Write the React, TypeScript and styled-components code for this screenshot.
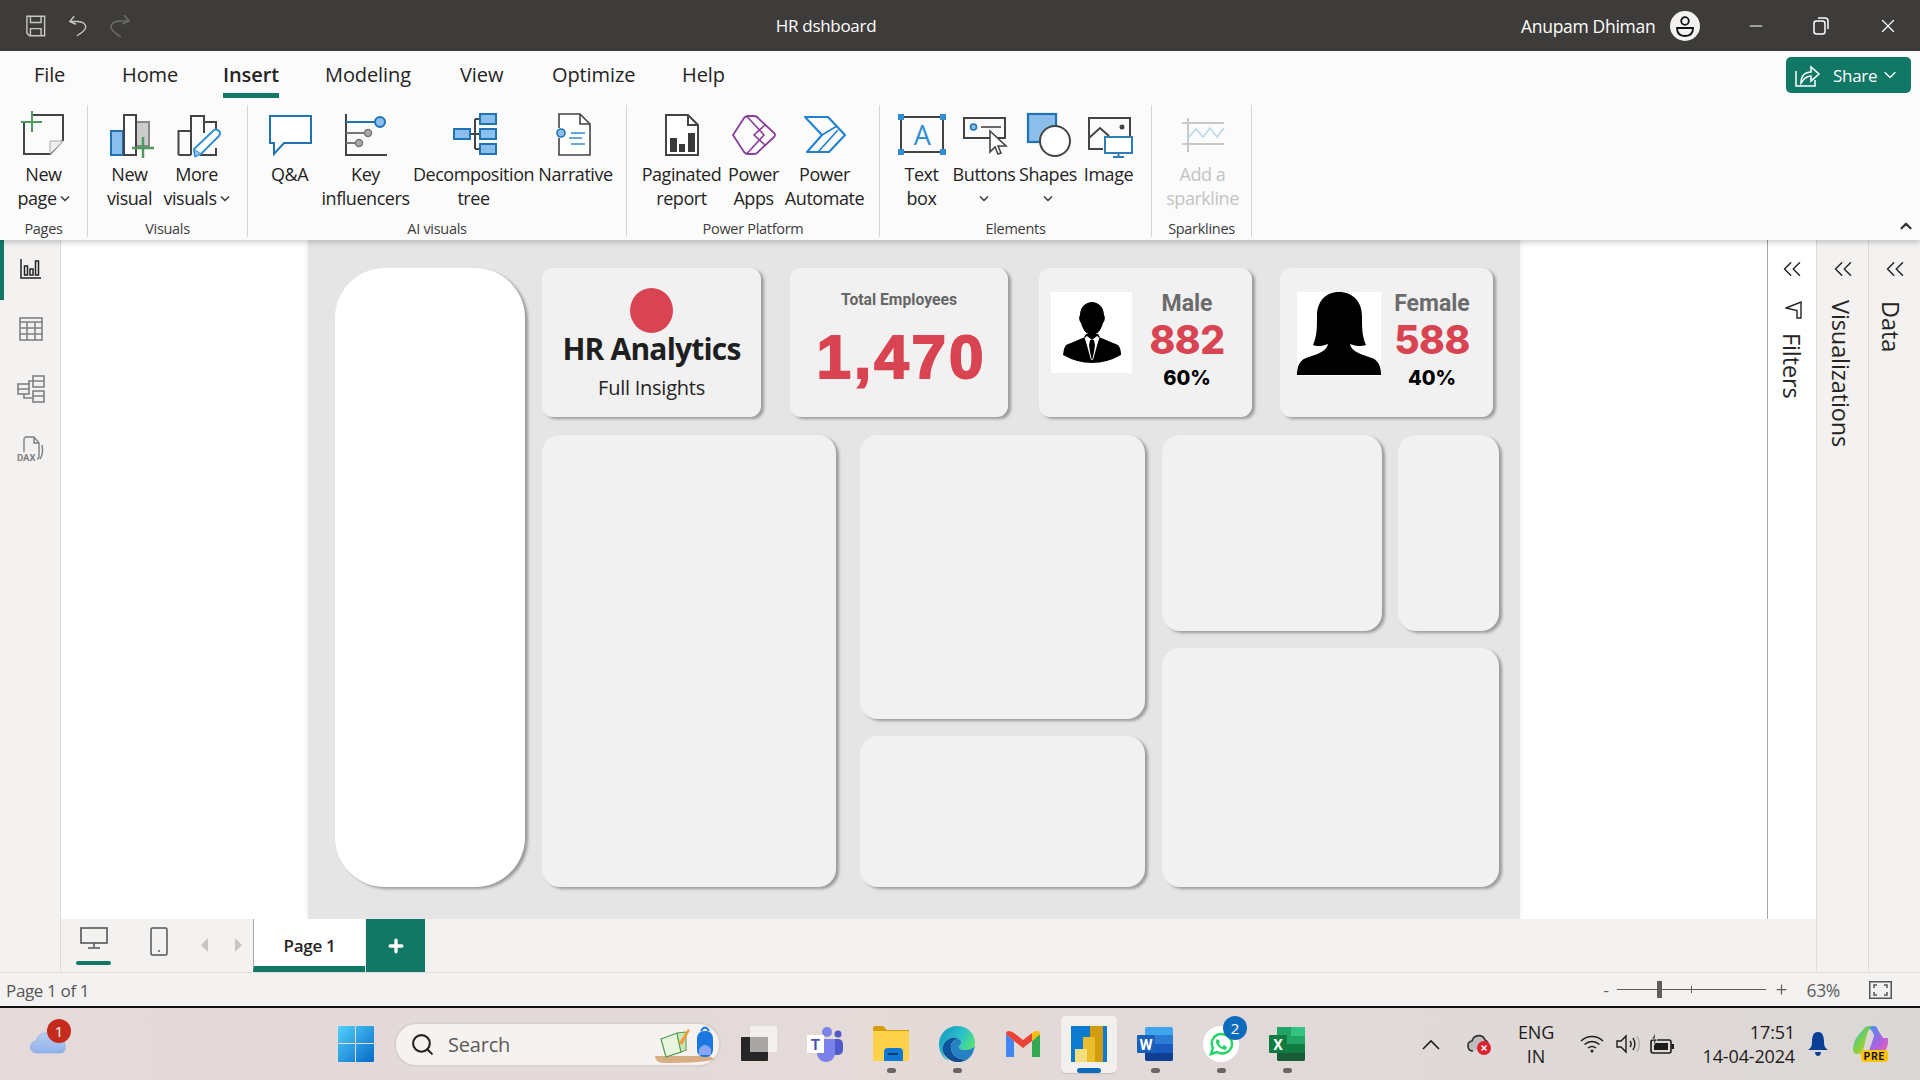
import React from 'react';
import styled, { createGlobalStyle } from 'styled-components';
import { ChevronDown, ChevronUp, ChevronsLeft, Minus, X, Search as SearchIcon, Plus } from 'lucide-react';

const Global = createGlobalStyle`
  html, body { margin: 0; padding: 0; width: 1920px; height: 1080px; overflow: hidden; background: #fff; }
  * { box-sizing: border-box; }
  body { font-family: "Open Sans", "Noto Sans", sans-serif; color: #252423; }
`;

const Shell = styled.div`
  width: 1920px; height: 1080px; display: flex; flex-direction: column; overflow: hidden;
`;
const TitleBar = styled.header`
  height: 51px; flex: none; background: #3d3c3a; color: #fff; display: flex; align-items: center;
`;
const QuickTools = styled.div`
  width: 131px; flex: none; display: flex; align-items: center; padding-left: 26px; gap: 22px;
`;
const MirrorIcon = styled.span`
  display: flex; transform: scaleX(-1);
`;
const DocTitle = styled.div`
  flex: 1; text-align: center; font-size: 17px; letter-spacing: -0.3px;
`;
const UserArea = styled.div`
  width: 399px; flex: none; display: flex; align-items: center;
`;
const UserName = styled.span`
  width: 133px; font-size: 17.5px; white-space: nowrap; letter-spacing: -0.3px;
`;
const WinButton = styled.span<{ $ml: number }>`
  display: flex; margin-left: ${p => p.$ml}px;
`;

const Ribbon = styled.section`
  height: 189px; flex: none; background: #fbfbfb; position: relative; z-index: 2;
  box-shadow: 0 2px 6px rgba(0,0,0,.22);
`;
const TabRow = styled.nav`
  height: 54px; display: flex; align-items: flex-start; padding: 6px 9px 0 34px;
`;
const Tab = styled.div<{ $w: number }>`
  width: ${p => p.$w}px; font-size: 20px;
`;
const TabLabel = styled.span<{ $active?: boolean }>`
  display: inline-block; line-height: 36px; height: 41px; letter-spacing: -0.1px;
  font-weight: ${p => (p.$active ? 600 : 400)};
  border-bottom: 5px solid ${p => (p.$active ? '#117865' : 'transparent')};
`;
const ShareButton = styled.div`
  margin-left: auto; width: 125px; height: 36px; background: #117865; border-radius: 5px; color: #fff;
  display: flex; align-items: center; padding-left: 9px; font-size: 17px; letter-spacing: -0.3px;
`;
const ShareText = styled.span`
  margin-left: 12px; margin-right: 3px;
`;
const Groups = styled.div`
  display: flex; height: 132px; align-items: stretch;
`;
const Group = styled.div<{ $w: number; $pl: number }>`
  width: ${p => p.$w}px; flex: none; border-right: 1px solid #d6d6d6; display: flex; flex-direction: column;
  padding-left: ${p => p.$pl}px;
`;
const GroupItems = styled.div`
  display: flex; height: 112px; flex: none; padding-top: 5px;
`;
const GroupLabel = styled.div<{ $pl: number }>`
  margin-left: ${p => -p.$pl}px; text-align: center; font-size: 14.5px; line-height: 20px; color: #3d3c3b; flex: none;
  letter-spacing: -0.3px; padding-top: 2px;
`;
const Item = styled.div<{ $w: number; $off?: boolean }>`
  width: ${p => p.$w}px; flex: none; display: flex; flex-direction: column; align-items: center; padding-left: 1px;
  font-size: 18px; line-height: 24px; letter-spacing: -0.45px; white-space: nowrap; text-align: center;
  color: ${p => (p.$off ? '#c4c4c4' : '#252423')};
  & > svg:first-child { margin-bottom: 4px; }
`;
const ItemLine = styled.span`
  display: flex; align-items: center; height: 24px;
`;
const Collapse = styled.span`
  margin-left: auto; align-self: flex-end; display: flex; padding: 0 5px 2px 0; color: #333;
`;

const Workspace = styled.main`
  flex: 1; min-height: 0; display: flex; background: #f3f2f1;
`;
const Rail = styled.aside`
  width: 61px; flex: none; background: #f3f2f1; border-right: 1px solid #dedcda; display: flex; flex-direction: column;
`;
const RailButton = styled.div<{ $active?: boolean }>`
  height: 60px; display: flex; align-items: center; justify-content: center; padding: 0 0 3px 2px;
  box-shadow: ${p => (p.$active ? 'inset 4px 0 0 #117865' : 'none')};
`;
const Middle = styled.div`
  flex: 1; min-width: 0; display: flex; flex-direction: column;
`;
const CanvasRow = styled.div`
  flex: 1; min-height: 0; display: flex;
`;
const CanvasArea = styled.div`
  flex: 1; background: #fff; padding-left: 247px;
`;
const Canvas = styled.div`
  width: 1212px; height: 100%; background: #e5e5e5; display: flex; gap: 17px; padding: 28px 21px 0 27px;
  box-shadow: 0 0 6px rgba(0,0,0,.08);
`;
const cardShadow = '3px 2px 3px rgba(0,0,0,.32)';
const TallCard = styled.div`
  width: 190px; height: 619px; background: #fff; border-radius: 50px; box-shadow: ${cardShadow}; flex: none;
`;
const CanvasColumn = styled.div`
  flex: 1; display: flex; flex-direction: column; gap: 18px;
`;
const TopRow = styled.div`
  height: 149px; display: flex;
`;
const KpiCard = styled.div<{ $w: number; $ml?: number }>`
  width: ${p => p.$w}px; margin-left: ${p => p.$ml || 0}px; height: 149px; background: #f1f1f1; border-radius: 11px;
  box-shadow: ${cardShadow}; flex: none;
`;
const BrandCard = styled(KpiCard)`
  display: flex; flex-direction: column; align-items: center; padding-top: 20px;
`;
const BrandDot = styled.div`
  width: 43px; height: 45px; border-radius: 50%; background: #d94452;
`;
const BrandName = styled.div`
  font-size: 30px; font-weight: 700; line-height: 34px; color: #1f1f1f; letter-spacing: -0.8px; margin-top: -1px;
`;
const BrandSub = styled.div`
  font-size: 20px; line-height: 28px; color: #252423; letter-spacing: -0.25px; margin-top: 8px;
`;
const TotalCard = styled(KpiCard)`
  display: flex; flex-direction: column; align-items: center; padding-top: 21px;
`;
const TotalLabel = styled.div`
  font-family: Roboto, sans-serif; font-weight: 700; font-size: 15.7px; line-height: 22px; color: #666;
`;
const TotalValue = styled.div`
  font-family: "Liberation Sans", Arial, sans-serif; font-weight: 700; font-size: 62px; line-height: 70px; color: #d94452;
  -webkit-text-stroke: 2px #d94452; letter-spacing: 3px; margin: 11px 0 0 5px;
`;
const GenderCard = styled(KpiCard)<{ $pl: number }>`
  display: flex; padding: 24px 0 0 ${p => p.$pl}px;
`;
const Portrait = styled.div<{ $s: number }>`
  width: ${p => p.$s}px; height: ${p => p.$s}px; background: #fff; flex: none; display: flex;
`;
const GenderStats = styled.div<{ $ml: number }>`
  width: 100px; margin-left: ${p => p.$ml}px; margin-top: -1px; display: flex; flex-direction: column; align-items: center; flex: none;
`;
const GenderLabel = styled.div`
  font-family: Roboto, sans-serif; font-weight: 700; font-size: 23px; line-height: 26px; color: #6b6b6b;
`;
const GenderValue = styled.div`
  font-family: Inter, sans-serif; font-weight: 800; font-size: 39px; line-height: 46px; color: #d94452; margin-top: 0; letter-spacing: -0.5px;
`;
const GenderShare = styled.div`
  font-family: Inter, sans-serif; font-weight: 800; font-size: 20px; line-height: 24px; color: #000; margin-top: 3px;
`;
const LowerRow = styled.div`
  display: flex; height: 452px;
`;
const EmptyCard = styled.div<{ $w?: number; $h?: number; $ml?: number }>`
  width: ${p => (p.$w ? `${p.$w}px` : 'auto')}; height: ${p => (p.$h ? `${p.$h}px` : 'auto')};
  margin-left: ${p => p.$ml || 0}px; background: #f1f1f1; border-radius: 18px; box-shadow: ${cardShadow}; flex: none;
`;
const Stack = styled.div<{ $w: number; $ml: number }>`
  width: ${p => p.$w}px; margin-left: ${p => p.$ml}px; display: flex; flex-direction: column; gap: 17px; flex: none;
`;
const Pair = styled.div`
  display: flex; gap: 16px;
`;

const Pane = styled.div<{ $w: number; $bg: string; $line: string }>`
  width: ${p => p.$w}px; flex: none; background: ${p => p.$bg}; border-left: 1px solid ${p => p.$line};
  display: flex; flex-direction: column; align-items: center; padding-top: 14px;
`;
const PaneLabel = styled.div<{ $mt: number; $mr?: number }>`
  writing-mode: vertical-rl; font-size: 23.5px; line-height: 30px; margin-top: ${p => p.$mt}px; margin-right: ${p => p.$mr || 0}px;
  color: #252423; letter-spacing: -0.1px;
`;
const FilterMark = styled.span`
  display: flex; margin: 17px 0 0 4px;
`;

const BottomBar = styled.div`
  height: 53px; flex: none; display: flex; background: #f3f2f1;
`;
const DeviceCell = styled.div<{ $w: number }>`
  width: ${p => p.$w}px; flex: none; position: relative; display: flex; justify-content: center; padding-top: 8px;
`;
const DeviceMark = styled.span`
  position: absolute; left: 15px; bottom: 7px; width: 35px; height: 4px; border-radius: 2px; background: #117865;
`;
const PagerArrow = styled.svg<{ $ml?: number }>`
  width: 8px; height: 14px; margin: 11px 0 0 ${p => p.$ml || 0}px;
`;
const PageTab = styled.div`
  width: 112px; flex: none; background: #fff; border-left: 1px solid #a8a8a8; border-bottom: 6px solid #117865;
  display: flex; align-items: center; justify-content: center; font-size: 17px; font-weight: 600; color: #252423; padding-top: 5px; letter-spacing: -0.3px;
`;
const AddTab = styled.div`
  width: 59px; flex: none; margin-left: 1px; background: #117865; color: #fff; display: flex; align-items: center; justify-content: center;
`;
const StatusBar = styled.footer`
  height: 36px; flex: none; background: #f3f2f1; border-top: 1px solid #e1dfdd; border-bottom: 2px solid #111;
  display: flex; align-items: center; padding: 2px 28px 0 6px; font-size: 17px; color: #555; letter-spacing: -0.35px;
`;
const ZoomControls = styled.div`
  margin-left: auto; display: flex; align-items: center; color: #605e5c; margin-top: -2px;
`;
const ZoomTrack = styled.div`
  width: 149px; height: 1px; background: #605e5c; margin: 0 8px; position: relative;
`;
const ZoomThumb = styled.span`
  position: absolute; left: 40px; top: -8px; width: 5px; height: 17px; background: #605e5c;
`;
const ZoomTick = styled.span`
  position: absolute; left: 74px; top: -3px; width: 1px; height: 7px; background: #605e5c;
`;
const ZoomPercent = styled.span`
  margin: 0 29px 0 18px; font-size: 17.5px;
`;

const Taskbar = styled.div`
  height: 72px; flex: none; display: flex; align-items: center; padding-left: 30px;
  background: linear-gradient(90deg, #e3dad9 0%, #e4dad8 45%, #dcd8d6 100%);
  color: #1c1c1c;
`;
const Slot = styled.div<{ $w?: number; $ml: number }>`
  width: ${p => p.$w || 36}px; height: 36px; margin-left: ${p => p.$ml}px; flex: none; position: relative;
  display: flex; align-items: center; justify-content: center;
`;
const ActiveSlot = styled(Slot)`
  height: 57px; background: #f3efed; border-radius: 5px; box-shadow: 0 1px 1px rgba(0,0,0,.12);
`;
const RunDot = styled.span`
  position: absolute; left: 50%; bottom: -11px; width: 9px; height: 5px; margin-left: -4px; border-radius: 3px; background: #6b6665;
`;
const ActiveBar = styled.span`
  position: absolute; left: 16px; bottom: 0; width: 24px; height: 5px; border-radius: 3px; background: #0f6cbd;
`;
const CountBadge = styled.span<{ $bg: string; $x: number; $y: number }>`
  position: absolute; left: ${p => p.$x}px; top: ${p => p.$y}px; width: 24px; height: 24px; border-radius: 50%; background: ${p => p.$bg};
  color: #fff; font-size: 15px; display: flex; align-items: center; justify-content: center;
`;
const CloudHolder = styled.span`
  display: flex; margin-top: -6px;
`;
const SearchBox = styled.div`
  width: 327px; height: 45px; margin-left: 20px; flex: none; border-radius: 23px; background: #f6f2f0; border: 2px solid #d9d1cf;
  display: flex; align-items: center; padding-left: 14px; font-size: 20px; color: #5d5a59; letter-spacing: -0.2px;
`;
const SearchWord = styled.span`
  margin-left: 13px;
`;
const SearchArt = styled.span`
  margin-left: auto; display: flex; margin-right: 2px;
`;
const TrayText = styled.div<{ $w: number; $ml: number; $align: string }>`
  width: ${p => p.$w}px; margin-left: ${p => p.$ml}px; flex: none; font-size: 18px; line-height: 24px; text-align: ${p => p.$align}; letter-spacing: -0.15px;
  color: #1c1c1c;
`;

const ChevronTiny = () => <svg width="10" height="7" viewBox="0 0 10 7" style={{ marginLeft: 3 }}><path d="M1 1.5l4 4 4-4" fill="none" stroke="#333" strokeWidth="1.4" /></svg>;
const ChevronSolo = () => <svg width="10" height="7" viewBox="0 0 10 7"><path d="M1 1.5l4 4 4-4" fill="none" stroke="#333" strokeWidth="1.4" /></svg>;

const I48 = ({ children }: { children: React.ReactNode }) => <svg width="48" height="48" viewBox="0 0 48 48" fill="none">{children}</svg>;
const dk = '#444';
const bl = '#1f73b5';
const lb = '#8cbeec';
const gr = '#4f9a5e';

const NewPageIcon = () => <I48><path d="M4 12V44H30L43 30V5H12" stroke={dk} strokeWidth="2" /><path d="M30 44V31H43L30 44Z" fill="#f0f0f0" stroke="#aaa" /><path d="M12 1V22M1 12H22" stroke={gr} strokeWidth="2" /></I48>;
const NewVisualIcon = () => <I48><rect x="5" y="21" width="12" height="24" fill={lb} stroke={bl} strokeWidth="2" /><rect x="30" y="12" width="13" height="24" fill="#ccc" stroke="#888" strokeWidth="2" /><rect x="18" y="5" width="12" height="40" fill="#fff" stroke={dk} strokeWidth="2" /><path d="M37 27V48M26 38H48" stroke={gr} strokeWidth="2.5" /></I48>;
const MoreVisualsIcon = () => <I48><path d="M5.5 45V21H18M18 45H5.5M18 45V6H31V23M31 12H43V22M43 38V45H27" stroke={dk} strokeWidth="2" /><path d="M22 46l-1-7L40 21c2-2 4-2 6 0s1 3 0 5L28 44l-6 2Z" fill="#fff" stroke="#2f8fd0" strokeWidth="2" /><path d="M21 39l7 5-6 3Z" fill={lb} stroke="#2f8fd0" /></I48>;
const QnaIcon = () => <I48><path d="M4 6H45V33H18L8 44V33H4Z" fill="#fff" stroke={bl} strokeWidth="2" /></I48>;
const KeyIcon = () => <I48><path d="M4 4V45H45" stroke={dk} strokeWidth="2" /><path d="M4 12H38" stroke={bl} strokeWidth="2" /><circle cx="38" cy="12" r="5" fill={lb} stroke={bl} strokeWidth="2" /><path d="M4 23H26M4 33H17" stroke="#777" strokeWidth="2" /><circle cx="26" cy="23" r="3.5" fill="#aaa" stroke="#777" strokeWidth="1.5" /><circle cx="17" cy="33" r="3.5" fill="#aaa" stroke="#777" strokeWidth="1.5" /></I48>;
const DecompIcon = () => <I48><path d="M20 24H30M25 9V39M25 9H30M25 39H30" stroke={dk} strokeWidth="2" /><rect x="4" y="19" width="16" height="10" fill={lb} stroke={bl} strokeWidth="2" /><rect x="30" y="4" width="16" height="10" fill={lb} stroke={bl} strokeWidth="2" /><rect x="30" y="19" width="16" height="10" fill={lb} stroke={bl} strokeWidth="2" /><rect x="30" y="34" width="16" height="10" fill={lb} stroke={bl} strokeWidth="2" /></I48>;
const NarrativeIcon = () => <I48><path d="M7 18V4H28L38 14V45H7V28" fill="#fff" stroke={dk} strokeWidth="1.6" /><path d="M28 4V14H38" stroke={dk} strokeWidth="1.6" /><circle cx="9" cy="23" r="4" fill={lb} stroke={bl} strokeWidth="1.6" /><path d="M19 23H33M17 28H30M19 34H33" stroke="#2f8fd0" strokeWidth="1.6" /></I48>;
const PaginatedIcon = () => <I48><path d="M8 5H30L40 15V45H8Z" fill="#fff" stroke={dk} strokeWidth="2" /><path d="M30 5V15H40" stroke={dk} strokeWidth="2" /><path d="M12 28h7v14h-7zM21 34h6v8h-6zM30 23h7v19h-7z" fill="#3b3a39" /></I48>;
const PowerAppsIcon = () => <I48><path d="M3 25L14 8Q16 6 18 6H24Q27 6 29 9L44 23Q46 25 44 27L29 41Q27 44 24 44H18Q16 44 14 42Z" stroke="#8a3d9c" strokeWidth="1.8" /><path d="M17 6.500L34 25L17 43.500M35 15L24 25L35 35" stroke="#8a3d9c" strokeWidth="1.600" /></I48>;
const AutomateIcon = () => <I48><path d="M4 7H27L44 25L28 42H6L21 25Z" stroke="#1f7fd0" strokeWidth="2" strokeLinejoin="round" /><path d="M21 25L36 16M17 42L37 20" stroke="#1f7fd0" strokeWidth="1.6" /></I48>;
const TextBoxIcon = () => <I48><rect x="3" y="7" width="42" height="35" stroke={dk} strokeWidth="2" /><rect x="0" y="4" width="6" height="6" fill="#2f8fd0" /><rect x="42" y="4" width="6" height="6" fill="#2f8fd0" /><rect x="0" y="39" width="6" height="6" fill="#2f8fd0" /><rect x="42" y="39" width="6" height="6" fill="#2f8fd0" /><text x="24" y="35" textAnchor="middle" fontFamily="'Open Sans', sans-serif" fontSize="27" fill="#2f8fd0">A</text></I48>;
const ButtonsIcon = () => <I48><path d="M4 8H45V28H4Z" fill="#fbfbfb" stroke={dk} strokeWidth="2" /><circle cx="13.5" cy="17" r="3" fill={lb} stroke={bl} strokeWidth="1.5" /><path d="M21 17H41" stroke={dk} strokeWidth="1.6" /><path d="M30 21V42L35 37L38 44L41 43L38 36H46Z" fill="#fff" stroke={dk} strokeWidth="1.6" /></I48>;
const ShapesIcon = () => <I48><rect x="4" y="4" width="28" height="28" fill={lb} stroke={bl} strokeWidth="2.2" /><circle cx="31" cy="31" r="15" fill="#fff" stroke={dk} strokeWidth="2" /></I48>;
const ImageIcon = () => <I48><path d="M18 39H4V8H45V26" fill="#fbfbfb" stroke={dk} strokeWidth="2" /><path d="M4 28L15 18L24 26" stroke={dk} strokeWidth="2" /><circle cx="37" cy="17" r="2.5" fill={dk} /><rect x="20" y="27" width="27" height="16" fill="#fff" stroke="#2f7fb5" strokeWidth="2" /><path d="M33.5 43V47M28 47H39" stroke="#2f7fb5" strokeWidth="2" /></I48>;
const SparkIcon = () => <I48><path d="M3 13H45M3 34H45M9 8V42" stroke="#c8c8c8" strokeWidth="2" /><path d="M9 28L17 19L24 27L31 18L38 27L45 18" stroke="#b8d8ec" strokeWidth="1.6" /></I48>;

const SaveIcon = () => <svg width="22" height="24" viewBox="0 0 22 24" fill="none" stroke="#c8c6c4" strokeWidth="1.6"><path d="M1 1H21V23H4L1 20Z" /><path d="M5 1V8H17V1M5 23V15H17V23" /></svg>;
const UndoIcon = ({ c }: { c: string }) => <svg width="22" height="24" viewBox="0 0 22 24" fill="none" stroke={c} strokeWidth="1.6"><path d="M7 1L2 7L9 10M2 7H11C17 7 20 10 20 13C20 16 15 20 10 23" /></svg>;
const AvatarIcon = () => <svg width="30" height="30" viewBox="0 0 30 30"><circle cx="15" cy="15" r="15" fill="#f3f2f1" /><circle cx="15" cy="10" r="3.8" fill="none" stroke="#111" strokeWidth="1.8" /><path d="M7 17H23C23 22 20 25 15 25C10 25 7 22 7 17Z" fill="none" stroke="#111" strokeWidth="1.8" /></svg>;
const RestoreIcon = () => <svg width="16" height="18" viewBox="0 0 16 18" fill="none" stroke="#fff" strokeWidth="1.5"><rect x="1" y="4" width="11" height="13" rx="2.5" /><path d="M5 1H12C14 1 15 2 15 4V12" /></svg>;
const ShareIcon = () => <svg width="26" height="26" viewBox="0 0 26 26" fill="none" stroke="#fff" strokeWidth="1.5"><path d="M1 9V24H20V18" /><path d="M6 21C6 14 10 10 16 10V5L24 12L16 19V14C12 14 9 16 6 21Z" /></svg>;

const ReportRail = () => <svg width="22" height="22" viewBox="0 0 22 22" fill="none" stroke="#222" strokeWidth="1.5"><path d="M1 1V20H21" /><rect x="4.5" y="8" width="3" height="9" /><rect x="10" y="11" width="3" height="6" /><rect x="15.5" y="3" width="3" height="14" /></svg>;
const TableRail = () => <svg width="24" height="24" viewBox="0 0 24 24" fill="none" stroke="#808080" strokeWidth="1.6"><rect x="1" y="1" width="22" height="22" /><path d="M1 5H23M1 11H23M1 17H23M8 5V23M16 5V23" /></svg>;
const ModelRail = () => <svg width="28" height="28" viewBox="0 0 28 28" fill="none" stroke="#808080" strokeWidth="1.6"><rect x="1" y="9" width="11" height="10" /><rect x="16" y="1" width="11" height="11" /><rect x="16" y="16" width="11" height="11" /><path d="M1 14H12M16 6H27M16 21H27M12 9V6H16M7 19V23H16" /></svg>;
const DaxRail = () => <svg width="28" height="26" viewBox="0 0 28 26" fill="none"><path d="M7 16V3C7 2 8 1 9 1H17L22 7V20C22 22 21 23 20 23" stroke="#808080" strokeWidth="1.4" /><path d="M17 1V7H22M25 9C26 14 26 19 23 23" stroke="#808080" strokeWidth="1.4" /><text x="0" y="25" fontFamily="Roboto, sans-serif" fontWeight="700" fontSize="9.5" fill="#808080">DAX</text></svg>;
const FilterIcon = () => <svg width="18" height="18" viewBox="0 0 18 18" fill="none" stroke="#252423" strokeWidth="1.4"><path d="M1 7L16 1V17L12 17V9.5Z" /></svg>;

const MaleFigure = () => <svg width="81" height="81" viewBox="0 0 81 81"><path d="M41 10C47 10 53 15 53 23C54.5 25 54 29 52 31C50 38 47 42 41 44C35 42 32 38 30 31C28 29 27.500 25 29 23C29 15 35 10 41 10Z" /><path d="M12 63Q13 55 15 53L33 45.500L35 42H47L49 45.500L67 53Q70 56 70 63Q56 71 41 71Q26 71 12 63Z" /><path d="M33.500 46L36 44L41 48L46 44L48.500 46L47 50L42 68H40L35 50Z" fill="#fff" /><path d="M39 48H43L44 53L43 60L41 69L39 60L38 53Z" /></svg>;
const FemaleFigure = () => <svg width="84" height="84" viewBox="0 0 84 84"><path d="M42 0C56 0 65 10 65 24C65 36 65 44 69 53C64 55 58 54 53 52C54 58 60 61 72 65C80 67 84 72 84 83H0C0 72 4 67 12 65C24 61 30 58 31 52C26 54 20 55 16 53C20 44 20 36 20 24C20 10 28 0 42 0Z" /></svg>;

const CloudLogo = () => <svg width="36" height="26" viewBox="0 0 36 26"><defs><linearGradient id="cl" x1="0" y1="0" x2="0" y2="1"><stop offset="0" stopColor="#b8cdf2" /><stop offset="1" stopColor="#8fb2ea" /></linearGradient></defs><path d="M7 25C-1 25-2 14 6 13C8 5 18 2 24 8C30 6 36 12 35 19C36 23 33 25 30 25Z" fill="url(#cl)" stroke="#7fa6e3" strokeWidth=".6" /></svg>;
const WinLogo = () => <svg width="36" height="36" viewBox="0 0 36 36"><defs><linearGradient id="wl" x1="0" y1="0" x2="1" y2="1"><stop offset="0" stopColor="#52d1fb" /><stop offset="1" stopColor="#0669c9" /></linearGradient></defs><path d="M0 1Q0 0 1 0H17V17H0ZM18 0H35Q36 0 36 1V17H18ZM0 18H17V36H1Q0 36 0 35ZM18 18H36V35Q36 36 35 36H18Z" fill="url(#wl)" /></svg>;
const StudyArt = () => <svg width="64" height="38" viewBox="0 0 64 38"><path d="M2 31H56L62 34Q52 38 10 38Q2 37 2 31Z" fill="#d8ae84" /><path d="M8 14L24 8L28 27L13 32Z" fill="#e9f4dc" stroke="#4d9a50" strokeWidth="1.2" /><path d="M24 8L33 7V25L28 27Z" fill="#c9e6b4" stroke="#4d9a50" strokeWidth="1" /><path d="M26 18L35 4L37 5L29 20Z" fill="#f29a3c" /><rect x="44" y="6" width="16" height="26" rx="7" fill="#1a78e0" /><path d="M48 6Q52 -1 56 6" fill="none" stroke="#1a78e0" strokeWidth="2" /><path d="M46 24Q52 16 58 24V30H46Z" fill="#8aa5f5" /></svg>;
const TaskViewLogo = () => <svg width="36" height="36" viewBox="0 0 36 36"><rect x="0" y="11" width="27" height="24" rx="1" fill="#262626" /><rect x="9" y="0" width="27" height="26" rx="1" fill="#f3f1f0" opacity=".92" /><rect x="9" y="11" width="18" height="15" fill="#a8a6a5" /></svg>;
const TeamsLogo = () => <svg width="36" height="36" viewBox="0 0 36 36"><circle cx="20" cy="6" r="5" fill="#7b83eb" /><circle cx="31" cy="8" r="3.500" fill="#5059c9" /><rect x="24" y="13" width="12" height="16" rx="5" fill="#5059c9" /><path d="M10 13H28V27C28 32 24 36 19 36C14 36 10 32 10 27Z" fill="#7b83eb" /><rect x="0" y="9" width="17" height="18" fill="#fff" /><text x="8.500" y="24" textAnchor="middle" fontFamily="Roboto, sans-serif" fontWeight="700" fontSize="15" fill="#4b53bc">T</text></svg>;
const FolderLogo = () => <svg width="36" height="36" viewBox="0 0 36 36"><path d="M0 2Q0 0 2 0H10L14 4H36V10H0Z" fill="#d39c11" /><path d="M0 5H34Q36 5 36 7V34Q36 35 34 35H0Z" fill="#fdd14a" /><path d="M11 35V26Q11 22 15 22H26Q30 22 30 26V35Z" fill="#0f78d4" /><rect x="15" y="27" width="10" height="2" fill="#083f70" /></svg>;
const EdgeLogo = () => <svg width="36" height="36" viewBox="0 0 36 36"><defs><linearGradient id="eg" x1="0" y1="0" x2="1" y2=".6"><stop offset="0" stopColor="#1295c9" /><stop offset=".6" stopColor="#2cc4c6" /><stop offset="1" stopColor="#5ee76a" /></linearGradient><linearGradient id="eb" x1="0" y1="0" x2="1" y2="1"><stop offset="0" stopColor="#0c59a4" /><stop offset="1" stopColor="#114a8b" /></linearGradient></defs><path d="M18 0C28 0 36 7 36 17C36 24 30 24 26 24C21 24 19 22 20 20C22 18 24 16 20 13C14 9 6 13 4 20C2 26 6 32 10 35C4 33 0 26 0 18C0 8 8 0 18 0Z" fill="url(#eg)" /><path d="M4 20C6 13 14 9 20 13C13 13 10 20 13 26C15 31 22 35 29 33C25 36 18 37 13 35C6 32 2 26 4 20Z" fill="url(#eb)" /><path d="M13 26C10 20 13 13 20 13C24 16 22 18 20 20C19 22 21 24 26 24C30 24 35 23 36 19C35 26 32 31 29 33C22 35 15 31 13 26Z" fill="#1176c2" opacity=".9" /></svg>;
const GmailLogo = () => <svg width="34" height="26" viewBox="0 0 34 26"><path d="M0 3V26H8V10Z" fill="#4285f4" /><path d="M26 10V26H34V3Z" fill="#34a853" /><path d="M0 3Q0 0 3 0Q5 0 8 2L17 9L26 2V10L17 17L8 10L0 3Z" fill="#ea4335" /><path d="M26 2Q29 0 31 0Q34 0 34 3L26 10Z" fill="#fbbc04" /></svg>;
const PbiLogo = () => <svg width="36" height="36" viewBox="0 0 36 36"><rect width="36" height="36" fill="#0b7ad1" /><rect x="19" y="0" width="13" height="36" fill="#d39b10" /><rect x="12" y="11" width="12" height="25" fill="#e9bd2c" /><rect x="4" y="23" width="12" height="13" fill="#f5de7c" /></svg>;
const WordLogo = () => <svg width="36" height="34" viewBox="0 0 36 34"><rect x="8" y="0" width="28" height="34" rx="2" fill="#41a5ee" /><rect x="8" y="8" width="28" height="9" fill="#2b7cd3" /><rect x="8" y="17" width="28" height="9" fill="#185abd" /><path d="M8 26H36V32Q36 34 34 34H10Q8 34 8 32Z" fill="#103f91" /><rect x="0" y="8" width="18" height="18" rx="1" fill="#1a5fb8" /><text x="9" y="23" textAnchor="middle" fontFamily="Roboto, sans-serif" fontWeight="700" fontSize="15" fill="#fff">W</text></svg>;
const WhatsLogo = () => <svg width="36" height="36" viewBox="0 0 36 36"><ellipse cx="18" cy="18" rx="18" ry="18" fill="#fff" /><path d="M8 28L10 22C6 15 12 8 18 8C25 8 29 13 29 18C29 25 21 30 14 26Z" fill="none" stroke="#25d366" strokeWidth="2.4" /><path d="M14 13Q12 15 14 19Q17 23 22 24Q24 23 24 21L21 19L19 21Q16 19 16 17L17 15Z" fill="#25d366" /></svg>;
const ExcelLogo = () => <svg width="36" height="34" viewBox="0 0 36 34"><rect x="8" y="0" width="28" height="34" rx="2" fill="#21a366" /><rect x="22" y="0" width="14" height="9" fill="#33c481" /><rect x="8" y="0" width="14" height="9" fill="#21a366" /><rect x="22" y="17" width="14" height="9" fill="#107c41" /><rect x="8" y="17" width="14" height="9" fill="#107c41" /><path d="M8 26H36V32Q36 34 34 34H10Q8 34 8 32Z" fill="#185c37" /><rect x="0" y="8" width="18" height="18" rx="1" fill="#107c41" /><text x="9" y="23" textAnchor="middle" fontFamily="Roboto, sans-serif" fontWeight="700" fontSize="15" fill="#fff">X</text></svg>;
const CaretIcon = () => <svg width="18" height="11" viewBox="0 0 18 11" fill="none" stroke="#1c1c1c" strokeWidth="1.6"><path d="M1 10L9 2L17 10" /></svg>;
const TrayCloud = () => <svg width="24" height="22" viewBox="0 0 24 22"><path d="M6 18C0 18 -1 9 5 8C7 1 16 1 18 7C20 8 21 10 21 12" fill="#bdbdbd" stroke="#333" strokeWidth="1.6" /><circle cx="17" cy="15" r="7" fill="#e0202e" /><path d="M14.500 12.500L19.500 17.500M19.500 12.500L14.500 17.500" stroke="#fff" strokeWidth="1.6" /></svg>;
const WifiIcon = () => <svg width="24" height="18" viewBox="0 0 24 18" fill="none" stroke="#1c1c1c" strokeWidth="1.5"><path d="M1 6C7 0 17 0 23 6M4.500 9.500C9 5.500 15 5.500 19.500 9.500M8 13C10.500 11 13.500 11 16 13" /><circle cx="12" cy="16" r="1.500" fill="#1c1c1c" stroke="none" /></svg>;
const VolumeIcon = () => <svg width="24" height="20" viewBox="0 0 24 20" fill="none" stroke="#1c1c1c" strokeWidth="1.4"><path d="M1 7V13H5L10 18V2L5 7Z" /><path d="M14 7C15.500 9 15.500 11 14 13M17 4C19.500 8 19.500 12 17 16" /><path d="M21 2C24 7 24 13 21 18" stroke="#b5b0ae" /></svg>;
const BatteryIcon = () => <svg width="24" height="22" viewBox="0 0 24 22"><rect x="1" y="7" width="20" height="13" rx="2" fill="none" stroke="#1c1c1c" strokeWidth="1.6" /><rect x="4" y="10" width="14" height="7" fill="#1c1c1c" /><rect x="21.500" y="11" width="2.500" height="5" fill="#1c1c1c" /><path d="M5 0L2 6H7L4 12" fill="#1c1c1c" stroke="#e0dad8" strokeWidth=".8" /></svg>;
const BellIcon = () => <svg width="20" height="24" viewBox="0 0 20 24"><path d="M10 0C15 0 16 5 16 10C16 14 17 16 20 18H0C3 16 4 14 4 10C4 5 5 0 10 0Z" fill="#0a3f96" /><path d="M7 20H13C13 22 12 24 10 24C8 24 7 22 7 20Z" fill="#0a3f96" /></svg>;
const CopilotLogo = () => <svg width="36" height="36" viewBox="0 0 36 36"><defs><linearGradient id="cp" x1="0" y1="0" x2="1" y2="1"><stop offset="0" stopColor="#2bb3f0" /><stop offset=".45" stopColor="#7ad14a" /><stop offset="1" stopColor="#f2c832" /></linearGradient><linearGradient id="cq" x1="0" y1="0" x2="1" y2="1"><stop offset="0" stopColor="#2aa0f0" /><stop offset=".6" stopColor="#b060e0" /><stop offset="1" stopColor="#f06aa0" /></linearGradient></defs><path d="M10 4Q12 0 16 0H21Q16 2 14 8L10 25Q9 28 5 28H3Q0 28 0 22Q1 12 10 4Z" fill="url(#cp)" /><path d="M16 2Q18 0 21 0Q24 0 25 4L30 12H35Q36 22 30 27Q26 30 17 28H12Q16 26 17 22L21 10Q20 5 16 2Z" fill="url(#cq)" /><rect x="8" y="24" width="27" height="12" rx="3" fill="#ffc20a" /><text x="21.500" y="34" textAnchor="middle" fontFamily="Roboto, sans-serif" fontWeight="700" fontSize="10" letterSpacing="1" fill="#111">PRE</text></svg>;

const RibbonItem = ({ w, icon, lines, chevron, off }: { w: number; icon: React.ReactNode; lines: string[]; chevron?: boolean; off?: boolean }) => (
  <Item $w={w} $off={off}>
    {icon}
    {lines.map((l, i) => (
      <ItemLine key={i}>{l}{chevron && i === lines.length - 1 && l ? <ChevronTiny /> : null}</ItemLine>
    ))}
  </Item>
);

export default function App() {
  return (
    <Shell>
      <Global />
      <TitleBar>
        <QuickTools>
          <SaveIcon />
          <UndoIcon c="#c8c6c4" />
          <MirrorIcon><UndoIcon c="#6d6b69" /></MirrorIcon>
        </QuickTools>
        <DocTitle>HR dshboard</DocTitle>
        <UserArea>
          <UserName>Anupam Dhiman</UserName>
          <WinButton $ml={16}><AvatarIcon /></WinButton>
          <WinButton $ml={46}><Minus size={20} color="#fff" strokeWidth={1.4} /></WinButton>
          <WinButton $ml={47}><RestoreIcon /></WinButton>
          <WinButton $ml={48}><X size={22} color="#fff" strokeWidth={1.4} /></WinButton>
        </UserArea>
      </TitleBar>

      <Ribbon>
        <TabRow>
          <Tab $w={88}><TabLabel>File</TabLabel></Tab>
          <Tab $w={101}><TabLabel>Home</TabLabel></Tab>
          <Tab $w={102}><TabLabel $active>Insert</TabLabel></Tab>
          <Tab $w={135}><TabLabel>Modeling</TabLabel></Tab>
          <Tab $w={92}><TabLabel>View</TabLabel></Tab>
          <Tab $w={130}><TabLabel>Optimize</TabLabel></Tab>
          <Tab $w={60}><TabLabel>Help</TabLabel></Tab>
          <ShareButton>
            <ShareIcon />
            <ShareText>Share</ShareText>
            <ChevronDown size={20} strokeWidth={1.5} />
          </ShareButton>
        </TabRow>
        <Groups>
          <Group $w={88} $pl={8}>
            <GroupItems><RibbonItem w={70} icon={<NewPageIcon />} lines={['New', 'page']} chevron /></GroupItems>
            <GroupLabel $pl={8}>Pages</GroupLabel>
          </Group>
          <Group $w={160} $pl={8}>
            <GroupItems>
              <RibbonItem w={66} icon={<NewVisualIcon />} lines={['New', 'visual']} />
              <RibbonItem w={68} icon={<MoreVisualsIcon />} lines={['More', 'visuals']} chevron />
            </GroupItems>
            <GroupLabel $pl={8}>Visuals</GroupLabel>
          </Group>
          <Group $w={379} $pl={6}>
            <GroupItems>
              <RibbonItem w={70} icon={<QnaIcon />} lines={['Q&A']} />
              <RibbonItem w={82} icon={<KeyIcon />} lines={['Key', 'influencers']} />
              <RibbonItem w={134} icon={<DecompIcon />} lines={['Decomposition', 'tree']} />
              <RibbonItem w={70} icon={<NarrativeIcon />} lines={['Narrative']} />
            </GroupItems>
            <GroupLabel $pl={6}>AI visuals</GroupLabel>
          </Group>
          <Group $w={253} $pl={12}>
            <GroupItems>
              <RibbonItem w={84} icon={<PaginatedIcon />} lines={['Paginated', 'report']} />
              <RibbonItem w={60} icon={<PowerAppsIcon />} lines={['Power', 'Apps']} />
              <RibbonItem w={82} icon={<AutomateIcon />} lines={['Power', 'Automate']} />
            </GroupItems>
            <GroupLabel $pl={12}>Power Platform</GroupLabel>
          </Group>
          <Group $w={272} $pl={9}>
            <GroupItems>
              <RibbonItem w={64} icon={<TextBoxIcon />} lines={['Text', 'box']} />
              <Item $w={61}><ButtonsIcon /><ItemLine>Buttons</ItemLine><ItemLine><ChevronSolo /></ItemLine></Item>
              <Item $w={67}><ShapesIcon /><ItemLine>Shapes</ItemLine><ItemLine><ChevronSolo /></ItemLine></Item>
              <RibbonItem w={54} icon={<ImageIcon />} lines={['Image']} />
            </GroupItems>
            <GroupLabel $pl={9}>Elements</GroupLabel>
          </Group>
          <Group $w={100} $pl={5}>
            <GroupItems><RibbonItem w={90} icon={<SparkIcon />} lines={['Add a', 'sparkline']} off /></GroupItems>
            <GroupLabel $pl={5}>Sparklines</GroupLabel>
          </Group>
          <Collapse><ChevronUp size={18} strokeWidth={3} /></Collapse>
        </Groups>
      </Ribbon>

      <Workspace>
        <Rail>
          <RailButton $active><ReportRail /></RailButton>
          <RailButton><TableRail /></RailButton>
          <RailButton><ModelRail /></RailButton>
          <RailButton><DaxRail /></RailButton>
        </Rail>
        <Middle>
          <CanvasRow>
            <CanvasArea>
              <Canvas>
                <TallCard />
                <CanvasColumn>
                  <TopRow>
                    <BrandCard $w={219}>
                      <BrandDot />
                      <BrandName>HR Analytics</BrandName>
                      <BrandSub>Full Insights</BrandSub>
                    </BrandCard>
                    <TotalCard $w={218} $ml={29}>
                      <TotalLabel>Total Employees</TotalLabel>
                      <TotalValue>1,470</TotalValue>
                    </TotalCard>
                    <GenderCard $w={213} $ml={31} $pl={12}>
                      <Portrait $s={81}><MaleFigure /></Portrait>
                      <GenderStats $ml={5}>
                        <GenderLabel>Male</GenderLabel>
                        <GenderValue>882</GenderValue>
                        <GenderShare>60%</GenderShare>
                      </GenderStats>
                    </GenderCard>
                    <GenderCard $w={213} $ml={28} $pl={17}>
                      <Portrait $s={84}><FemaleFigure /></Portrait>
                      <GenderStats $ml={1}>
                        <GenderLabel>Female</GenderLabel>
                        <GenderValue>588</GenderValue>
                        <GenderShare>40%</GenderShare>
                      </GenderStats>
                    </GenderCard>
                  </TopRow>
                  <LowerRow>
                    <EmptyCard $w={294} $h={452} />
                    <Stack $w={285} $ml={24}>
                      <EmptyCard $h={284} />
                      <EmptyCard $h={151} />
                    </Stack>
                    <Stack $w={337} $ml={17}>
                      <Pair>
                        <EmptyCard $w={220} $h={196} />
                        <EmptyCard $w={101} $h={196} />
                      </Pair>
                      <EmptyCard $h={239} />
                    </Stack>
                  </LowerRow>
                </CanvasColumn>
              </Canvas>
            </CanvasArea>
            <Pane $w={49} $bg="#fff" $line="#a6a6a6">
              <ChevronsLeft size={30} strokeWidth={1.2} color="#252423" />
              <FilterMark><FilterIcon /></FilterMark>
              <PaneLabel $mt={14}>Filters</PaneLabel>
            </Pane>
          </CanvasRow>
          <BottomBar>
            <DeviceCell $w={65}>
              <svg width="28" height="22" viewBox="0 0 28 22" fill="none" stroke="#555" strokeWidth="1.6"><rect x="1" y="1" width="26" height="15" /><path d="M14 16V20M8 21H20" /></svg>
              <DeviceMark />
            </DeviceCell>
            <DeviceCell $w={66}>
              <svg width="18" height="29" viewBox="0 0 18 29" fill="none" stroke="#555" strokeWidth="1.5"><rect x="1" y="1" width="16" height="27" rx="1.500" /><path d="M8 24H10" /></svg>
            </DeviceCell>
            <DeviceCell $w={26}><PagerArrow viewBox="0 0 8 14"><path d="M7 0V14L0 7Z" fill="#c8c6c4" /></PagerArrow></DeviceCell>
            <DeviceCell $w={35}><PagerArrow viewBox="0 0 8 14" $ml={4}><path d="M1 0V14L8 7Z" fill="#c8c6c4" /></PagerArrow></DeviceCell>
            <PageTab>Page 1</PageTab>
            <AddTab><Plus size={20} strokeWidth={4} /></AddTab>
          </BottomBar>
        </Middle>
        <Pane $w={52} $bg="#f3f2f1" $line="#dedcda">
          <ChevronsLeft size={30} strokeWidth={1.2} color="#252423" />
          <PaneLabel $mt={16} $mr={4}>Visualizations</PaneLabel>
        </Pane>
        <Pane $w={52} $bg="#f3f2f1" $line="#dedcda">
          <ChevronsLeft size={30} strokeWidth={1.2} color="#252423" />
          <PaneLabel $mt={17} $mr={7}>Data</PaneLabel>
        </Pane>
      </Workspace>

      <StatusBar>
        Page 1 of 1
        <ZoomControls>
          <span>-</span>
          <ZoomTrack><ZoomThumb /><ZoomTick /></ZoomTrack>
          <Plus size={15} strokeWidth={2} />
          <ZoomPercent>63%</ZoomPercent>
          <svg width="23" height="18" viewBox="0 0 23 18" fill="none" stroke="#555" strokeWidth="1.5"><rect x=".75" y=".75" width="21.500" height="16.500" /><path d="M5 7V4H8M15 4H18V7M18 11V14H15M8 14H5V11" /></svg>
        </ZoomControls>
      </StatusBar>

      <Taskbar>
        <Slot $ml={0}><CloudHolder><CloudLogo /></CloudHolder><CountBadge $bg="#c42b1c" $x={17} $y={-7}>1</CountBadge></Slot>
        <Slot $ml={272}><WinLogo /></Slot>
        <SearchBox>
          <SearchIcon size={25} strokeWidth={2} color="#222" />
          <SearchWord>Search</SearchWord>
          <SearchArt><StudyArt /></SearchArt>
        </SearchBox>
        <Slot $ml={20}><TaskViewLogo /></Slot>
        <Slot $ml={30}><TeamsLogo /></Slot>
        <Slot $ml={30}><FolderLogo /><RunDot /></Slot>
        <Slot $ml={30}><EdgeLogo /><RunDot /></Slot>
        <Slot $ml={30}><GmailLogo /></Slot>
        <ActiveSlot $w={56} $ml={20}><PbiLogo /><ActiveBar /></ActiveSlot>
        <Slot $ml={20}><WordLogo /><RunDot /></Slot>
        <Slot $ml={30}><WhatsLogo /><RunDot /><CountBadge $bg="#0f6cbd" $x={20} $y={-10}>2</CountBadge></Slot>
        <Slot $ml={30}><ExcelLogo /><RunDot /></Slot>
        <Slot $w={20} $ml={116}><CaretIcon /></Slot>
        <Slot $w={24} $ml={26}><TrayCloud /></Slot>
        <TrayText $w={50} $ml={20} $align="center">ENG<br />IN</TrayText>
        <Slot $w={24} $ml={19}><WifiIcon /></Slot>
        <Slot $w={24} $ml={12}><VolumeIcon /></Slot>
        <Slot $w={24} $ml={10}><BatteryIcon /></Slot>
        <TrayText $w={118} $ml={3} $align="right">17:51<br />14-04-2024</TrayText>
        <Slot $w={20} $ml={13}><BellIcon /></Slot>
        <Slot $ml={25}><CopilotLogo /></Slot>
      </Taskbar>
    </Shell>
  );
}
